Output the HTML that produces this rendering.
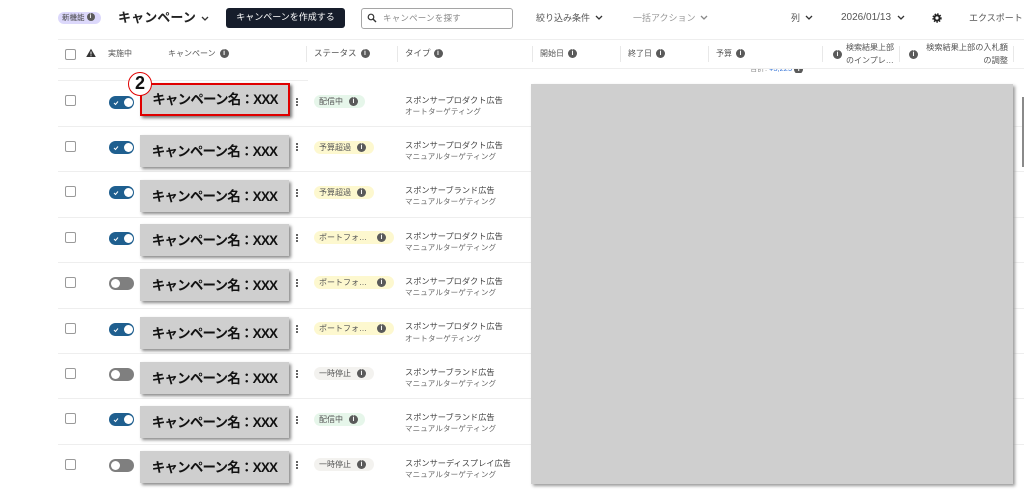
<!DOCTYPE html>
<html lang="ja"><head><meta charset="utf-8">
<style>
html,body{margin:0;padding:0;background:#fff}
body{position:relative;width:1024px;height:490px;overflow:hidden;font-family:"Liberation Sans","Noto Sans CJK JP",sans-serif;color:#4a4f55}
.a{position:absolute;white-space:nowrap}
.cb{position:absolute;left:65px;width:9px;height:9px;border:1px solid #9a9a9a;border-radius:2px;background:#fff}
.tg{position:absolute;left:109px;width:25px;height:13px;border-radius:7px;background:#1f5f8f}
.tg:after{content:"";position:absolute;right:1.5px;top:2px;width:9px;height:9px;border-radius:50%;background:#fff}
.tg svg{position:absolute;left:4px;top:3.5px}
.tg.off{background:#7f7f7f}
.tg.off:after{right:auto;left:2px}
.nm{position:absolute;left:140px;width:149px;height:32px;line-height:33px;background:#cfcfcf;box-shadow:2px 2px 3px #8a8a8a;color:#111;font-weight:700;font-size:13.5px;letter-spacing:-.8px;text-align:center;white-space:nowrap}
.dots{position:absolute;left:295.5px;width:3px}
.dots i{display:block;width:2px;height:2px;border-radius:50%;background:#333;margin-bottom:1px}
.pill{position:absolute;left:314px;height:13px;border-radius:7px;font-size:8px;line-height:13px;padding-left:5px;box-sizing:border-box;white-space:nowrap;color:#555}
.g{background:#e6f6ea}.y{background:#fdf8cf}.p{background:#f3f2ef}
.inf{display:inline-block;width:9px;height:9px;border-radius:50%;background:#5a5a5a;color:#fff;font:700 7px/9px "Liberation Sans",sans-serif;text-align:center;font-style:normal}
.pill .inf{position:absolute;top:2px}
.t1{position:absolute;left:405px;font-size:8.2px;color:#444;white-space:nowrap}
.t2{position:absolute;left:405px;font-size:7.5px;color:#666;white-space:nowrap;letter-spacing:.15px}
.ln{position:absolute;left:58px;height:1px;background:#eeeeee}
.vl{position:absolute;top:46px;width:1px;height:16px;background:#e8e8e8}
.h{position:absolute;top:48px;font-size:8px;line-height:11px;color:#555;white-space:nowrap}
.h .inf{margin-left:4px;vertical-align:middle;position:relative;top:-.5px}
.chev{position:absolute;width:8px;height:5px}
.tb{position:absolute;top:12px;font-size:9.5px;line-height:12px;color:#555;white-space:nowrap}
</style></head><body>

<div class="a" style="left:58px;top:12px;width:43px;height:12px;border-radius:6px;background:#dcd8fb;font-size:7.5px;line-height:12px;padding-left:4px;box-sizing:border-box;color:#444">新機能 <i class="inf" style="width:8px;height:8px;line-height:8px;font-size:6px;vertical-align:middle;position:relative;top:-1px">i</i></div>
<div class="a" style="left:118px;top:9px;font-size:13px;font-weight:700;line-height:17px;color:#222;letter-spacing:.1px">キャンペーン</div>
<svg class="chev" style="left:201px;top:16px" viewBox="0 0 8 5"><path d="M1 1l3 3 3-3" fill="none" stroke="#333" stroke-width="1.3"/></svg>
<div class="a" style="left:226px;top:8px;width:119px;height:20px;border-radius:3px;background:#161d2b;color:#fff;font-size:9px;line-height:19px;text-align:center">キャンペーンを作成する</div>
<div class="a" style="left:361px;top:8px;width:150px;height:19px;border:1px solid #a5a5a5;border-radius:3px;background:#fff"></div>
<svg class="a" style="left:367px;top:13px" width="10" height="10" viewBox="0 0 10 10"><circle cx="4" cy="4" r="2.8" fill="none" stroke="#333" stroke-width="1.2"/><path d="M6 6l3 3" stroke="#333" stroke-width="1.4"/></svg>
<div class="tb" style="left:383px;font-size:8.5px;color:#888;letter-spacing:.2px">キャンペーンを探す</div>

<div class="tb" style="left:536px;font-size:9px">絞り込み条件</div>
<svg class="chev" style="left:595px;top:15px" viewBox="0 0 8 5"><path d="M1 1l3 3 3-3" fill="none" stroke="#333" stroke-width="1.3"/></svg>
<div class="tb" style="left:633px;font-size:9px;color:#999">一括アクション</div>
<svg class="chev" style="left:700px;top:15px" viewBox="0 0 8 5"><path d="M1 1l3 3 3-3" fill="none" stroke="#888" stroke-width="1.3"/></svg>
<div class="tb" style="left:791px;font-size:9px">列</div>
<svg class="chev" style="left:805px;top:15px" viewBox="0 0 8 5"><path d="M1 1l3 3 3-3" fill="none" stroke="#333" stroke-width="1.3"/></svg>
<div class="tb" style="left:841px;font-size:10px;top:12px">2026/01/13</div>
<svg class="chev" style="left:897px;top:15px" viewBox="0 0 8 5"><path d="M1 1l3 3 3-3" fill="none" stroke="#333" stroke-width="1.3"/></svg>
<svg class="a" style="left:932px;top:13px" width="10" height="10" viewBox="0 0 10 10"><circle cx="5" cy="5" r="2.6" fill="none" stroke="#222" stroke-width="2"/><circle cx="5" cy="5" r="4" fill="none" stroke="#222" stroke-width="1.4" stroke-dasharray="1.5 1.2"/></svg>
<div class="tb" style="left:969px;font-size:9px">エクスポート</div>

<div class="ln" style="top:39px;width:966px"></div>
<div class="ln" style="top:68px;width:966px"></div>

<div class="cb" style="top:49px"></div>
<svg class="a" style="left:86px;top:48px" width="10" height="10" viewBox="0 0 10 10"><path d="M5 .8L9.8 9H.2z" fill="#333"/><path d="M5 3.5v3M5 7.2v1" stroke="#fff" stroke-width=".9"/></svg>
<div class="h" style="left:108px">実施中</div>
<div class="h" style="left:168px">キャンペーン<i class="inf">i</i></div>
<div class="vl" style="left:306px"></div>
<div class="h" style="left:314px;font-size:8.5px">ステータス<i class="inf">i</i></div>
<div class="vl" style="left:397px"></div>
<div class="h" style="left:405px;font-size:8.5px">タイプ<i class="inf" style="margin-left:3px">i</i></div>
<div class="vl" style="left:532px"></div>
<div class="h" style="left:540px">開始日<i class="inf">i</i></div>
<div class="vl" style="left:620px"></div>
<div class="h" style="left:628px">終了日<i class="inf">i</i></div>
<div class="vl" style="left:708px"></div>
<div class="h" style="left:716px">予算<i class="inf">i</i></div>
<div class="vl" style="left:822px"></div>
<i class="inf a" style="left:833px;top:50px">i</i>
<div class="h" style="left:846px;top:42px;line-height:12.5px;font-size:8px">検索結果上部<br>のインプレ…</div>
<div class="vl" style="left:899px"></div>
<i class="inf a" style="left:909px;top:50px">i</i>
<div class="h" style="left:920px;top:42px;width:88px;line-height:12.5px;font-size:8.2px;text-align:right">検索結果上部の入札額<br>の調整</div>
<div class="vl" style="left:1013px"></div>

<div class="a" style="left:750px;top:69px;height:4px;width:60px;overflow:hidden;font-size:7.5px;line-height:9px"><div style="margin-top:-5px;color:#888">合計: <span style="color:#3b78d8">¥3,225</span> <i class="inf">i</i></div></div>

<div class="ln" style="top:80px;width:250px"></div>
<div class="ln" style="top:126px;width:966px"></div>
<div class="ln" style="top:171px;width:966px"></div>
<div class="ln" style="top:217px;width:966px"></div>
<div class="ln" style="top:262px;width:966px"></div>
<div class="ln" style="top:308px;width:966px"></div>
<div class="ln" style="top:353px;width:966px"></div>
<div class="ln" style="top:398px;width:966px"></div>
<div class="ln" style="top:444px;width:966px"></div>

<!-- Row 1 -->
<div class="cb" style="top:95px"></div>
<div class="tg" style="top:96px"><svg width="6" height="6" viewBox="0 0 6 6"><path d="M1 3l1.5 1.5L5 1.5" fill="none" stroke="#fff" stroke-width="1"/></svg></div>
<div class="dots" style="top:98px"><i></i><i></i><i></i></div>
<div class="pill g" style="top:95px;width:51px">配信中<i class="inf" style="left:35px">i</i></div>
<div class="t1" style="top:94px">スポンサープロダクト広告</div>
<div class="t2" style="top:106px">オートターゲティング</div>

<!-- Row 2 -->
<div class="cb" style="top:141px"></div>
<div class="tg" style="top:141px"><svg width="6" height="6" viewBox="0 0 6 6"><path d="M1 3l1.5 1.5L5 1.5" fill="none" stroke="#fff" stroke-width="1"/></svg></div>
<div class="dots" style="top:143px"><i></i><i></i><i></i></div>
<div class="pill y" style="top:141px;width:60px">予算超過<i class="inf" style="left:43px">i</i></div>
<div class="t1" style="top:139px">スポンサープロダクト広告</div>
<div class="t2" style="top:151px">マニュアルターゲティング</div>

<!-- Row 3 -->
<div class="cb" style="top:186px"></div>
<div class="tg" style="top:186px"><svg width="6" height="6" viewBox="0 0 6 6"><path d="M1 3l1.5 1.5L5 1.5" fill="none" stroke="#fff" stroke-width="1"/></svg></div>
<div class="dots" style="top:189px"><i></i><i></i><i></i></div>
<div class="pill y" style="top:186px;width:60px">予算超過<i class="inf" style="left:43px">i</i></div>
<div class="t1" style="top:184px">スポンサーブランド広告</div>
<div class="t2" style="top:196px">マニュアルターゲティング</div>

<!-- Row 4 -->
<div class="cb" style="top:232px"></div>
<div class="tg" style="top:232px"><svg width="6" height="6" viewBox="0 0 6 6"><path d="M1 3l1.5 1.5L5 1.5" fill="none" stroke="#fff" stroke-width="1"/></svg></div>
<div class="dots" style="top:234px"><i></i><i></i><i></i></div>
<div class="pill y" style="top:231px;width:80px">ポートフォ…<i class="inf" style="left:63px">i</i></div>
<div class="t1" style="top:230px">スポンサープロダクト広告</div>
<div class="t2" style="top:242px">マニュアルターゲティング</div>

<!-- Row 5 -->
<div class="cb" style="top:277px"></div>
<div class="tg off" style="top:277px"></div>
<div class="dots" style="top:279px"><i></i><i></i><i></i></div>
<div class="pill y" style="top:276px;width:80px">ポートフォ…<i class="inf" style="left:63px">i</i></div>
<div class="t1" style="top:275px">スポンサープロダクト広告</div>
<div class="t2" style="top:287px">マニュアルターゲティング</div>

<!-- Row 6 -->
<div class="cb" style="top:323px"></div>
<div class="tg" style="top:323px"><svg width="6" height="6" viewBox="0 0 6 6"><path d="M1 3l1.5 1.5L5 1.5" fill="none" stroke="#fff" stroke-width="1"/></svg></div>
<div class="dots" style="top:325px"><i></i><i></i><i></i></div>
<div class="pill y" style="top:322px;width:80px">ポートフォ…<i class="inf" style="left:63px">i</i></div>
<div class="t1" style="top:320px">スポンサープロダクト広告</div>
<div class="t2" style="top:333px">オートターゲティング</div>

<!-- Row 7 -->
<div class="cb" style="top:368px"></div>
<div class="tg off" style="top:368px"></div>
<div class="dots" style="top:370px"><i></i><i></i><i></i></div>
<div class="pill p" style="top:367px;width:60px">一時停止<i class="inf" style="left:43px">i</i></div>
<div class="t1" style="top:366px">スポンサーブランド広告</div>
<div class="t2" style="top:378px">マニュアルターゲティング</div>

<!-- Row 8 -->
<div class="cb" style="top:413px"></div>
<div class="tg" style="top:413px"><svg width="6" height="6" viewBox="0 0 6 6"><path d="M1 3l1.5 1.5L5 1.5" fill="none" stroke="#fff" stroke-width="1"/></svg></div>
<div class="dots" style="top:416px"><i></i><i></i><i></i></div>
<div class="pill g" style="top:413px;width:51px">配信中<i class="inf" style="left:35px">i</i></div>
<div class="t1" style="top:411px">スポンサーブランド広告</div>
<div class="t2" style="top:423px">マニュアルターゲティング</div>

<!-- Row 9 -->
<div class="cb" style="top:459px"></div>
<div class="tg off" style="top:459px"></div>
<div class="dots" style="top:461px"><i></i><i></i><i></i></div>
<div class="pill p" style="top:458px;width:60px">一時停止<i class="inf" style="left:43px">i</i></div>
<div class="t1" style="top:457px">スポンサーディスプレイ広告</div>
<div class="t2" style="top:469px">マニュアルターゲティング</div>

<!-- Campaign name masks -->
<div class="nm" style="top:83px;width:150px;height:33px;line-height:29px;box-sizing:border-box;border:2px solid #e00000;box-shadow:2px 2px 3px #777">キャンペーン名：XXX</div>
<div class="nm" style="top:135px">キャンペーン名：XXX</div>
<div class="nm" style="top:180px">キャンペーン名：XXX</div>
<div class="nm" style="top:224px">キャンペーン名：XXX</div>
<div class="nm" style="top:269px">キャンペーン名：XXX</div>
<div class="nm" style="top:317px">キャンペーン名：XXX</div>
<div class="nm" style="top:362px">キャンペーン名：XXX</div>
<div class="nm" style="top:406px">キャンペーン名：XXX</div>
<div class="nm" style="top:451px">キャンペーン名：XXX</div>

<!-- Numbered marker -->
<div class="a" style="left:128px;top:72px;width:24px;height:24px;box-sizing:border-box;border:1.5px solid #e00000;border-radius:50%;background:#fff;color:#111;font-size:18px;font-weight:700;line-height:21px;text-align:center">2</div>

<!-- Gray mask -->
<div class="a" style="left:531px;top:84px;width:482px;height:400px;background:#cfcfcf;box-shadow:2px 2px 3px #999"></div>

<!-- Scrollbar -->
<div class="a" style="left:1022px;top:97px;width:2px;height:70px;background:#8a8a8a"></div>

</body></html>
